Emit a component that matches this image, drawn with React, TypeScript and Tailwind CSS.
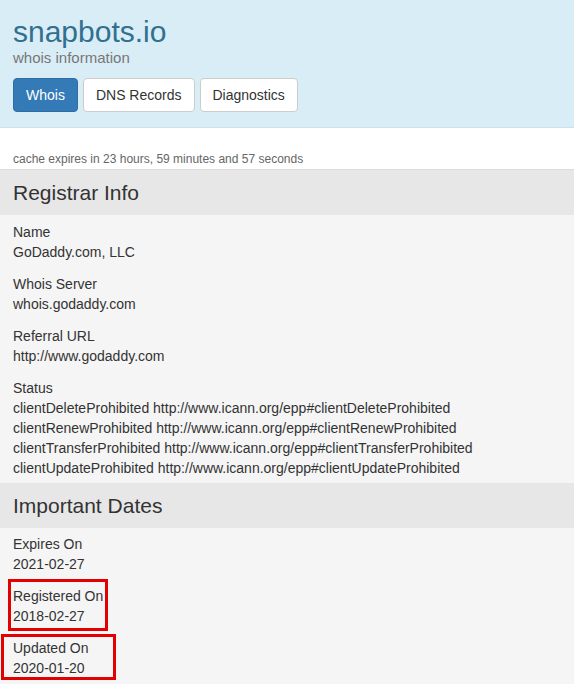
import React from 'react';

const registrar = [
  { label: 'Name', lines: ['GoDaddy.com, LLC'] },
  { label: 'Whois Server', lines: ['whois.godaddy.com'] },
  { label: 'Referral URL', lines: ['http://www.godaddy.com'] },
  {
    label: 'Status',
    lines: [
      'clientDeleteProhibited http://www.icann.org/epp#clientDeleteProhibited',
      'clientRenewProhibited http://www.icann.org/epp#clientRenewProhibited',
      'clientTransferProhibited http://www.icann.org/epp#clientTransferProhibited',
      'clientUpdateProhibited http://www.icann.org/epp#clientUpdateProhibited',
    ],
  },
];

function SectionTitle({ children }: { children: React.ReactNode }) {
  return (
    <div className="bg-[#e7e7e7] px-[13px] py-[11px] text-[21px] leading-[1.1] text-[#333]">
      {children}
    </div>
  );
}

function Item({ label, lines, mark }: { label: string; lines: string[]; mark?: 'a' | 'b' }) {
  return (
    <div className="relative">
      {mark === 'a' && (
        <div className="pointer-events-none absolute -top-[7px] -bottom-[5px] left-[-5px] w-[100px] border-[3px] border-[#e30000]" />
      )}
      {mark === 'b' && (
        <div className="pointer-events-none absolute -top-[4px] -bottom-[2px] left-[-12px] w-[115px] border-[3px] border-[#e30000]" />
      )}
      <div>{label}</div>
      {lines.map((l) => (
        <div key={l}>{l}</div>
      ))}
    </div>
  );
}

export default function App() {
  return (
    <div className="min-h-[684px] bg-[#f5f5f5] font-['Liberation_Sans',Arial,sans-serif] text-[14px] leading-5 text-[#333]">
      <div className="border-b border-[#c8e3f0] bg-[#d9edf7] px-[13px] pb-[15px] pt-[15px]">
        <h1 className="text-[30px] leading-[33px] text-[#31708f]">snapbots.io</h1>
        <div className="text-[15px] leading-5 text-[#777]">whois information</div>
        <div className="mt-[10px] flex gap-[5px]">
          <button className="rounded border border-[#2e6da4] bg-[#337ab7] px-3 py-[6px] leading-5 text-white">
            Whois
          </button>
          <button className="rounded border border-[#ccc] bg-white px-3 py-[6px] leading-5 text-[#333]">
            DNS Records
          </button>
          <button className="rounded border border-[#ccc] bg-white px-3 py-[6px] leading-5 text-[#333]">
            Diagnostics
          </button>
        </div>
      </div>

      <div className="border-b border-[#ddd] bg-white px-[13px] pb-[1px] pt-[23px] text-[12px] leading-[17px] text-[#666]">
        cache expires in 23 hours, 59 minutes and 57 seconds
      </div>

      <SectionTitle>Registrar Info</SectionTitle>
      <div className="space-y-3 px-[13px] pb-[5px] pt-[7px]">
        {registrar.map((r) => (
          <Item key={r.label} label={r.label} lines={r.lines} />
        ))}
      </div>

      <SectionTitle>Important Dates</SectionTitle>
      <div className="space-y-3 px-[13px] pb-[6px] pt-[6px]">
        <Item label="Expires On" lines={['2021-02-27']} />
        <Item label="Registered On" lines={['2018-02-27']} mark="a" />
        <Item label="Updated On" lines={['2020-01-20']} mark="b" />
      </div>
    </div>
  );
}
